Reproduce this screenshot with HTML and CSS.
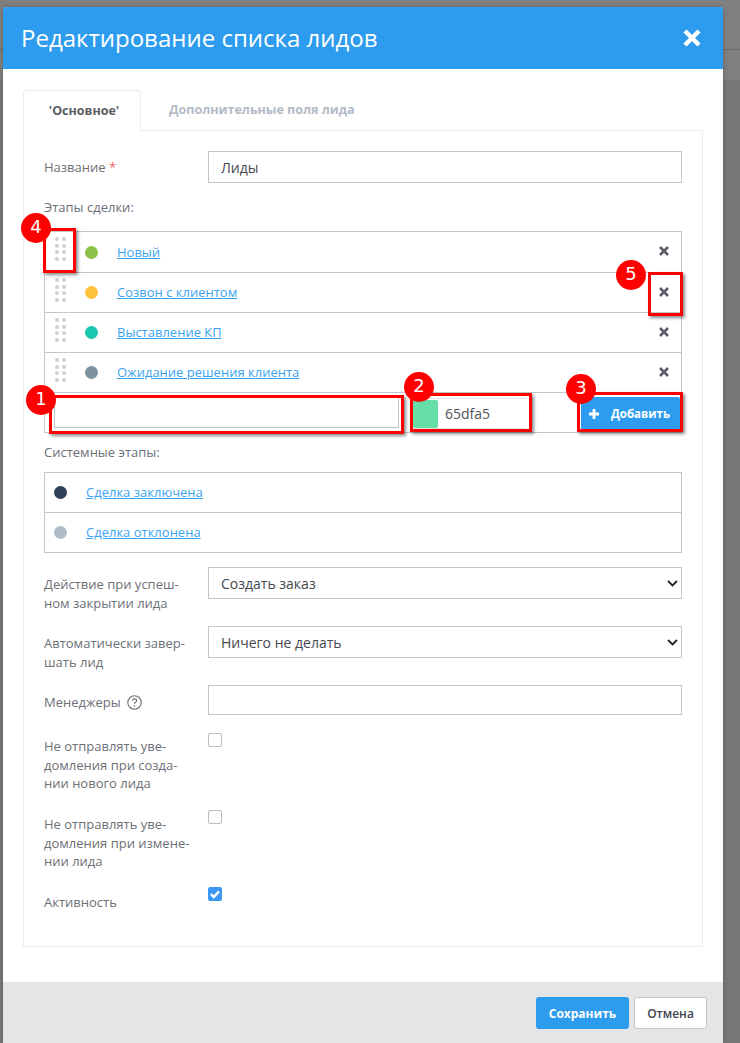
FILE: index.html
```html
<!DOCTYPE html>
<html lang="ru">
<head>
<meta charset="utf-8">
<title>Редактирование списка лидов</title>
<link rel="stylesheet" href="styles.css">
</head>
<body>
<div class="modal">
  <header class="modal-head">
    <h1 class="modal-title">Редактирование списка лидов</h1>
    <svg class="close-big" width="18" height="18" viewBox="0 0 18 18"><path d="M2 2L16 16M16 2L2 16"/></svg>
  </header>
  <main class="modal-body">
    <nav class="tabs">
      <span class="tab tab-active">'Основное'</span>
      <span class="tab">Дополнительные поля лида</span>
    </nav>
    <section class="panel">
      <div class="row-name field-row">
        <label class="field-label">Название <span class="req">*</span></label>
        <input class="control" type="text" value="Лиды">
      </div>
      <p class="section-label stage-label">Этапы сделки:</p>
      <div class="list">
        <div class="item item-first">
          <svg class="drag" width="12" height="26" viewBox="0 0 12 26"><circle cx="3" cy="3" r="2"/><circle cx="10" cy="3" r="2"/><circle cx="3" cy="10" r="2"/><circle cx="10" cy="10" r="2"/><circle cx="3" cy="16" r="2"/><circle cx="10" cy="16" r="2"/><circle cx="3" cy="23" r="2"/><circle cx="10" cy="23" r="2"/></svg>
          <span class="dot dot-green"></span>
          <a class="stage-link" href="#">Новый</a>
          <svg class="remove" width="10" height="10" viewBox="0 0 10 10"><path d="M1 1L9 9M9 1L1 9"/></svg>
        </div>
        <div class="item">
          <svg class="drag" width="12" height="26" viewBox="0 0 12 26"><circle cx="3" cy="3" r="2"/><circle cx="10" cy="3" r="2"/><circle cx="3" cy="10" r="2"/><circle cx="10" cy="10" r="2"/><circle cx="3" cy="16" r="2"/><circle cx="10" cy="16" r="2"/><circle cx="3" cy="23" r="2"/><circle cx="10" cy="23" r="2"/></svg>
          <span class="dot dot-yellow"></span>
          <a class="stage-link" href="#">Созвон с клиентом</a>
          <svg class="remove" width="10" height="10" viewBox="0 0 10 10"><path d="M1 1L9 9M9 1L1 9"/></svg>
        </div>
        <div class="item">
          <svg class="drag" width="12" height="26" viewBox="0 0 12 26"><circle cx="3" cy="3" r="2"/><circle cx="10" cy="3" r="2"/><circle cx="3" cy="10" r="2"/><circle cx="10" cy="10" r="2"/><circle cx="3" cy="16" r="2"/><circle cx="10" cy="16" r="2"/><circle cx="3" cy="23" r="2"/><circle cx="10" cy="23" r="2"/></svg>
          <span class="dot dot-teal"></span>
          <a class="stage-link" href="#">Выставление КП</a>
          <svg class="remove" width="10" height="10" viewBox="0 0 10 10"><path d="M1 1L9 9M9 1L1 9"/></svg>
        </div>
        <div class="item">
          <svg class="drag" width="12" height="26" viewBox="0 0 12 26"><circle cx="3" cy="3" r="2"/><circle cx="10" cy="3" r="2"/><circle cx="3" cy="10" r="2"/><circle cx="10" cy="10" r="2"/><circle cx="3" cy="16" r="2"/><circle cx="10" cy="16" r="2"/><circle cx="3" cy="23" r="2"/><circle cx="10" cy="23" r="2"/></svg>
          <span class="dot dot-slate"></span>
          <a class="stage-link" href="#">Ожидание решения клиента</a>
          <svg class="remove" width="10" height="10" viewBox="0 0 10 10"><path d="M1 1L9 9M9 1L1 9"/></svg>
        </div>
        <div class="item item-add">
          <input class="new-stage" type="text">
          <div class="color-field"><span class="swatch"></span><span class="color-code">65dfa5</span></div>
          <button class="btn-add" type="button">
            <svg width="12" height="12" viewBox="0 0 12 12"><path d="M6 1V11M1 6H11"/></svg>
            <span>Добавить</span>
          </button>
        </div>
      </div>
      <p class="section-label system-label">Системные этапы:</p>
      <div class="list system-list">
        <div class="item item-system">
          <span class="dot dot-navy"></span>
          <a class="stage-link" href="#">Сделка заключена</a>
        </div>
        <div class="item item-system">
          <span class="dot dot-ash"></span>
          <a class="stage-link" href="#">Сделка отклонена</a>
        </div>
      </div>
      <div class="field-row row-select">
        <label class="field-label">Действие при успеш-<br>ном закрытии лида</label>
        <div class="select-wrap">
          <select class="control"><option>Создать заказ</option></select>
          <svg class="chevron" width="11" height="7" viewBox="0 0 11 7"><path d="M1 1L5.5 5.5L10 1"/></svg>
        </div>
      </div>
      <div class="field-row row-select">
        <label class="field-label">Автоматически завер-<br>шать лид</label>
        <div class="select-wrap">
          <select class="control"><option>Ничего не делать</option></select>
          <svg class="chevron" width="11" height="7" viewBox="0 0 11 7"><path d="M1 1L5.5 5.5L10 1"/></svg>
        </div>
      </div>
      <div class="field-row row-managers">
        <label class="field-label">Менеджеры
          <svg class="help" width="15" height="15" viewBox="0 0 15 15"><circle cx="7.5" cy="7.5" r="6.7"/><path d="M5.4 5.8C5.5 4.5 6.4 3.9 7.5 3.9C8.7 3.9 9.6 4.6 9.6 5.7C9.6 7.2 7.5 7.2 7.5 9"/><circle class="help-dot" cx="7.5" cy="11" r=".8"/></svg>
        </label>
        <input class="control control-short" type="text">
      </div>
      <div class="field-row row-check row-check-first">
        <label class="field-label">Не отправлять уве-<br>домления при созда-<br>нии нового лида</label>
        <span class="check"></span>
      </div>
      <div class="field-row row-check">
        <label class="field-label">Не отправлять уве-<br>домления при измене-<br>нии лида</label>
        <span class="check"></span>
      </div>
      <div class="field-row row-check row-check-active">
        <label class="field-label">Активность</label>
        <span class="check check-on"><svg width="14" height="14" viewBox="0 0 14 14"><path d="M3 7.2L5.8 10L11 4.4"/></svg></span>
      </div>
    </section>
  </main>
  <footer class="modal-foot">
    <button class="btn btn-save" type="button">Сохранить</button>
    <button class="btn btn-cancel" type="button">Отмена</button>
  </footer>
</div>

<span class="mark mark-4"></span><span class="badge badge-4">4</span>
<span class="mark mark-5"></span><span class="badge badge-5">5</span>
<span class="mark mark-1"></span><span class="badge badge-1">1</span>
<span class="mark mark-2"></span><span class="badge badge-2">2</span>
<span class="mark mark-3"></span><span class="badge badge-3">3</span>
</body>
</html>
```

FILE: styles.css
```css
* { box-sizing: border-box; }
html, body { height: 100%; }
body {
  margin: 0;
  height: 1043px;
  overflow: hidden;
  position: relative;
  font-family: "Open Sans", "Liberation Sans", sans-serif;
  font-size: 13px;
  line-height: 18.57px;
  color: #6c7077;
  background: linear-gradient(#808080 0 49px, #6b6b6b 49px 50px, #7f7f7f 50px 80px, #777 80px);
  padding: 7px 17px 0 3px;
}
.modal {
  width: 720px;
  height: 1036px;
  background: #fff;
  border-radius: 3px 3px 0 0;
  display: flex;
  flex-direction: column;
  box-shadow: 0 0 4px rgba(0,0,0,.25);
}
.modal-head {
  height: 62px;
  flex: none;
  background: #2d9cee;
  border-radius: 3px 3px 0 0;
  color: #fff;
  display: flex;
  align-items: center;
  justify-content: space-between;
  padding: 0 22px 0 18px;
}
.modal-title { margin: 0; font-size: 24px; line-height: 32px; font-weight: 400; }
.close-big { fill: none; stroke: #fff; stroke-width: 4.4; }
.modal-body { flex: 1; padding: 21px 20px 0; }
.tabs { display: flex; height: 40px; position: relative; z-index: 1; }
.tab {
  padding: 11px 15px 0 28px;
  font-size: 12.5px;
  font-weight: 700;
  color: #b2bac6;
}
.tab-active {
  width: 118px;
  padding: 11px 0 0 4px;
  text-align: center;
  color: #5a5d63;
  background: #fff;
  border: 1px solid #ebecee;
  border-bottom: 0;
  border-radius: 4px 4px 0 0;
  height: 41px;
}
.panel {
  height: 817px;
  border: 1px solid #ebecee;
  padding: 20px 20px 0;
}
.field-row { display: flex; }
.field-label { width: 164px; flex: none; display: block; }
.req { color: #f1625f; }
.control {
  display: block;
  width: 474px;
  height: 32px;
  border: 1px solid #c6c6c6;
  border-radius: 0;
  background: #fff;
  padding: 0 12px;
  font: 14px "Open Sans", "Liberation Sans", sans-serif;
  color: #45484d;
  outline: 0;
  appearance: none;
}
.control-short { height: 30px; }
.row-name .field-label { padding-top: 7px; }
.section-label { margin: 0; }
.stage-label { margin: 15px 0 14.5px; }
.system-label { margin: 10px 0 10.5px; }
.list { width: 638px; }
.item {
  height: 40px;
  display: flex;
  align-items: center;
  border: 1px solid #c6c6c6;
  border-bottom: 0;
  padding-left: 9px;
}
.item-first { height: 41px; }
.item-add { height: 41px; border-bottom: 1px solid #c6c6c6; padding-left: 9px; }
.system-list .item:last-child { height: 41px; border-bottom: 1px solid #c6c6c6; }
.drag { fill: #cfcfd1; flex: none; margin-top: -5.5px; }
.dot { width: 13px; height: 13px; border-radius: 50%; flex: none; margin-left: 19px; }
.dot-green { background: #8bc34a; }
.dot-yellow { background: #ffc23d; }
.dot-teal { background: #1cc7b1; }
.dot-slate { background: #7d919e; }
.dot-navy { background: #2f3f55; margin-left: 0; }
.dot-ash { background: #afbcc5; margin-left: 0; }
.stage-link { margin-left: 19px; color: #3ba3ee; text-decoration: underline; }
.remove { margin-left: auto; margin-right: 12px; margin-top: -2px; fill: none; stroke: #5c6066; stroke-width: 2.6; flex: none; }
.new-stage {
  width: 345px;
  height: 31px;
  border: 1px solid #c6c6c6;
  background: #fff;
  outline: 0;
  flex: none;
}
.color-field {
  width: 114px;
  height: 31px;
  margin: 2px 0 0 13px;
  display: flex;
  align-items: center;
  gap: 7px;
  flex: none;
  color: #50545a;
  font-size: 14px;
  border: 1px solid #e4e4e4;
  border-width: 1px 0 1px 1px;
}
.swatch { width: 25px; height: 28px; background: #65dfa5; border-radius: 2px; }
.color-code { padding-top: 1px; }
.btn-add {
  margin: 2px 0 0 55px;
  width: 99px;
  height: 33px;
  background: #2d9cee;
  color: #fff;
  border: 0;
  border-radius: 2px;
  font: 700 11.5px "Open Sans", "Liberation Sans", sans-serif;
  display: flex;
  align-items: center;
  gap: 11px;
  padding: 0 0 0 7px;
  flex: none;
}
.btn-add svg { fill: none; stroke: #fff; stroke-width: 2.8; flex: none; }
.row-select { margin-top: 14px; height: 45px; }
.row-select .field-label { padding-top: 8px; }
.row-managers { margin-top: 14px; height: 30px; }
.row-managers .field-label { padding-top: 8px; }
.help { fill: none; stroke: #6c6f74; stroke-width: 1.1; vertical-align: -3px; margin-left: 3px; }
.help-dot { fill: #6c6f74; stroke: none; }
.select-wrap { position: relative; }
.chevron { position: absolute; right: 4px; top: 13px; fill: none; stroke: #222; stroke-width: 1.8; }
.row-check { margin-top: 18px; height: 59px; }
.row-check .field-label { padding-top: 5px; }
.row-check-first .field-label { padding-top: 4px; }
.row-check-active .field-label { padding-top: 6px; }
.check {
  width: 14px;
  height: 14px;
  border: 1px solid #bdbdbd;
  border-radius: 2px;
  background: #fff;
  flex: none;
}
.check-on { background: #3b97f3; border-color: #3b97f3; display: block; }
.check-on svg { display: block; margin: -1px; fill: none; stroke: #fff; stroke-width: 2.4; }
.modal-foot {
  height: 61px;
  flex: none;
  background: #e4e5e7;
  display: flex;
  justify-content: flex-end;
  align-items: flex-start;
  gap: 5px;
  padding: 15px 16px 0 0;
}
.btn {
  height: 32px;
  border-radius: 3px;
  font: 600 12px "Open Sans", "Liberation Sans", sans-serif;
}
.btn-save { width: 93px; background: #2d9cee; color: #fff; border: 0; font-weight: 700; }
.btn-cancel { width: 73px; background: #fff; color: #3d4350; border: 1px solid #c6c6c6; }

/* Screenshot annotations laid over the form */
.mark {
  position: absolute;
  border: 3px solid #ff0000;
  box-shadow: 2px 2px 3px rgba(0,0,0,.45);
}
.mark-4 { left: 43px; top: 228px; width: 33px; height: 45px; }
.mark-5 { left: 648px; top: 272px; width: 35px; height: 44px; }
.mark-1 { left: 49px; top: 395px; width: 355px; height: 39px; }
.mark-2 { left: 410px; top: 393px; width: 122px; height: 39px; }
.mark-3 { left: 577px; top: 392px; width: 106px; height: 40px; }
.badge {
  position: absolute;
  width: 30px;
  height: 30px;
  border-radius: 50%;
  background: #ff0000;
  color: #fff;
  text-align: center;
  font: 18px/28px "DejaVu Sans", sans-serif;
}
.badge-4 { left: 21px; top: 213px; }
.badge-5 { left: 616px; top: 260px; }
.badge-1 { left: 26px; top: 385px; }
.badge-2 { left: 404px; top: 372px; }
.badge-3 { left: 566px; top: 374px; }
```
